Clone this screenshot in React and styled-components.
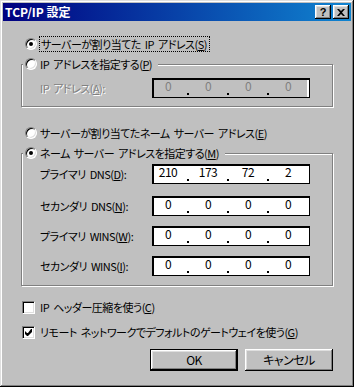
import React from "react";
import styled, { createGlobalStyle } from "styled-components";

const GlobalStyle = createGlobalStyle`
  html, body {
    margin: 0;
    padding: 0;
    background: #c0c0c0;
  }
  body {
    font-family: "Noto Sans CJK JP", "Noto Sans", sans-serif;
    font-size: 12px;
    color: #000;
  }
`;

const servers = [
  { label: <>プライマリ DNS(<u>D</u>):</>, value: ["210", "173", "72", "2"] },
  { label: <>セカンダリ DNS(<u>N</u>):</>, value: ["0", "0", "0", "0"] },
  { label: <>プライマリ WINS(<u>W</u>):</>, value: ["0", "0", "0", "0"] },
  { label: <>セカンダリ WINS(<u>I</u>):</>, value: ["0", "0", "0", "0"] },
];

function IpAddress({ value, disabled }) {
  return (
    <IpField $disabled={disabled}>
      {value.map((v, i) => (
        <React.Fragment key={i}>
          {i > 0 && (
            <DotCell>
              <Dot />
            </DotCell>
          )}
          <IpCell $disabled={disabled}>{v}</IpCell>
        </React.Fragment>
      ))}
    </IpField>
  );
}

function App() {
  return (
    <>
      <GlobalStyle />
      <Window>
        <TitleBar>
          <Title>TCP/IP 設定</Title>
          <CaptionButtons>
            <CapButton>?</CapButton>
            <CapButton>
              <svg width="8" height="7" viewBox="0 0 8 7">
                <path d="M0 0h2l2 2 2-2h2L5 3.5 8 7H6L4 5 2 7H0l3-3.5z" fill="#000" />
              </svg>
            </CapButton>
          </CaptionButtons>
        </TitleBar>

        <Content>
          <OptionRow>
            <Radio $checked />
            <FocusText>サーバーが割り当てた IP アドレス(<u>S</u>)</FocusText>
          </OptionRow>

          <GroupBox $top={13}>
            <Legend>
              <Radio />
              <span>IP アドレスを指定する(<u>P</u>)</span>
            </Legend>
            <FieldRow $top={7}>
              <DisabledLabel>IP アドレス(<u>A</u>):</DisabledLabel>
              <IpAddress value={["0", "0", "0", "0"]} disabled />
            </FieldRow>
            <GroupEnd $h={8} />
          </GroupBox>

          <OptionRow $top={19}>
            <Radio />
            <span>サーバーが割り当てたネーム サーバー アドレス(<u>E</u>)</span>
          </OptionRow>

          <GroupBox $top={13}>
            <Legend>
              <Radio $checked />
              <span>ネーム サーバー アドレスを指定する(<u>M</u>)</span>
            </Legend>
            {servers.map((s, i) => (
              <FieldRow key={i} $top={i === 0 ? 4 : i === 1 ? 12 : 10}>
                <FieldLabel>{s.label}</FieldLabel>
                <IpAddress value={s.value} />
              </FieldRow>
            ))}
            <GroupEnd $h={9} />
          </GroupBox>

          <CheckRow $top={14}>
            <CheckBox />
            <span>IP ヘッダー圧縮を使う(<u>C</u>)</span>
          </CheckRow>
          <CheckRow $top={11}>
            <CheckBox>
              <svg width="7" height="7" viewBox="0 0 7 7">
                <path d="M6 0h1v3L3 7H2L0 5V2l2 2h1z" fill="#000" />
              </svg>
            </CheckBox>
            <span>リモート ネットワークでデフォルトのゲートウェイを使う(<u>G</u>)</span>
          </CheckRow>

          <ButtonBar>
            <PushButton $default>OK</PushButton>
            <PushButton>キャンセル</PushButton>
          </ButtonBar>
        </Content>
      </Window>
    </>
  );
}

export default App;

const Window = styled.div`
  width: 354px;
  height: 387px;
  box-sizing: border-box;
  padding: 3px;
  display: flex;
  flex-direction: column;
  background: #c0c0c0;
  box-shadow: inset -1px -1px #000, inset 1px 1px #dfdfdf,
    inset -2px -2px #808080, inset 2px 2px #fff;
`;

const TitleBar = styled.div`
  height: 18px;
  display: flex;
  align-items: center;
  padding: 0 2px;
  background: linear-gradient(to right, #000080, #1084d0);
  color: #fff;
`;

const Title = styled.div`
  flex: 1;
  font-weight: bold;
  font-size: 12px;
  line-height: 14px;
`;

const CaptionButtons = styled.div`
  display: flex;
  gap: 2px;
`;

const CapButton = styled.div`
  width: 16px;
  height: 14px;
  box-sizing: border-box;
  display: flex;
  align-items: center;
  justify-content: center;
  background: #c0c0c0;
  color: #000;
  font-family: "Liberation Sans", sans-serif;
  font-weight: bold;
  font-size: 11px;
  line-height: 11px;
  box-shadow: inset -1px -1px #000, inset 1px 1px #fff,
    inset -2px -2px #808080, inset 2px 2px #dfdfdf;
`;

const Content = styled.div`
  flex: 1;
  display: flex;
  flex-direction: column;
  padding: 16px 18px 0 18px;
  font-size: 11px;
  letter-spacing: -0.5px;
  word-spacing: 2px;
  font-feature-settings: "palt";
`;

const OptionRow = styled.div`
  height: 14px;
  display: flex;
  align-items: center;
  gap: 3px;
  margin: ${(p) => p.$top || 0}px 0 0 4px;
  line-height: 14px;
  white-space: nowrap;
`;

const FocusText = styled.span`
  outline: 1px dotted #000;
  padding: 0 2px 0 1px;
`;

const Radio = styled.span`
  position: relative;
  width: 12px;
  height: 12px;
  flex-shrink: 0;
  box-sizing: border-box;
  border-radius: 50%;
  background: #fff;
  border: 1px solid;
  border-color: #808080 #fff #fff #808080;
  box-shadow: inset 1px 1px #000, inset -1px -1px #dfdfdf;

  &::after {
    content: "";
    display: ${(p) => (p.$checked ? "block" : "none")};
    position: absolute;
    left: 3px;
    top: 3px;
    width: 4px;
    height: 4px;
    border-radius: 50%;
    background: #000;
  }
`;

const GroupBox = styled.div`
  display: flex;
  flex-direction: column;
  margin-top: ${(p) => p.$top}px;
  padding-left: 18px;
  border: 1px solid #808080;
  box-shadow: inset 1px 1px #fff, 1px 1px #fff;
  width: 312px;
  box-sizing: border-box;
`;

const Legend = styled.div`
  align-self: flex-start;
  height: 14px;
  display: flex;
  align-items: center;
  gap: 3px;
  margin: -8px 0 0 -17px;
  padding: 0 6px 0 2px;
  background: #c0c0c0;
  line-height: 14px;
  white-space: nowrap;
`;

const FieldRow = styled.div`
  display: grid;
  grid-template-columns: 112px 158px;
  align-items: center;
  margin-top: ${(p) => p.$top}px;
  white-space: nowrap;
`;

const FieldLabel = styled.span`
  line-height: 14px;
`;

const DisabledLabel = styled(FieldLabel)`
  color: #808080;
  text-shadow: 1px 1px 0 #fff;
`;

const GroupEnd = styled.div`
  height: ${(p) => p.$h}px;
`;

const IpField = styled.div`
  width: 158px;
  height: 20px;
  box-sizing: border-box;
  display: flex;
  padding-left: 1px;
  border: 1px solid #000;
  background: ${(p) => (p.$disabled ? "#c0c0c0" : "#fff")};
  box-shadow: inset 1px 1px #000
    ${(p) => (p.$disabled ? ", inset -2px 0 #fff" : "")};
`;

const IpCell = styled.span`
  width: 28px;
  text-align: center;
  font-size: 12px;
  line-height: 13px;
  color: ${(p) => (p.$disabled ? "#808080" : "#000")};
`;

const DotCell = styled.span`
  width: 12px;
  display: flex;
  justify-content: center;
  align-items: flex-end;
  padding-bottom: 2px;
`;

const Dot = styled.span`
  width: 2px;
  height: 2px;
  background: #000;
`;

const CheckRow = styled.div`
  height: 14px;
  display: flex;
  align-items: center;
  gap: 5px;
  margin: ${(p) => p.$top}px 0 0 1px;
  line-height: 14px;
  white-space: nowrap;
`;

const CheckBox = styled.span`
  width: 13px;
  height: 13px;
  flex-shrink: 0;
  box-sizing: border-box;
  display: flex;
  align-items: center;
  justify-content: center;
  background: #fff;
  border: 1px solid;
  border-color: #808080 #fff #fff #808080;
  box-shadow: inset 1px 1px #000, inset -1px -1px #dfdfdf;
`;

const ButtonBar = styled.div`
  display: flex;
  justify-content: flex-end;
  gap: 7px;
  margin-top: 10px;
`;

const PushButton = styled.div`
  width: 88px;
  height: 22px;
  box-sizing: border-box;
  display: flex;
  align-items: center;
  justify-content: center;
  background: #c0c0c0;
  font-size: 12px;
  line-height: 14px;
  border: ${(p) => (p.$default ? "1px solid #000" : "0")};
  box-shadow: inset -1px -1px #000, inset 1px 1px #fff,
    inset -2px -2px #808080, inset 2px 2px #dfdfdf;
`;
